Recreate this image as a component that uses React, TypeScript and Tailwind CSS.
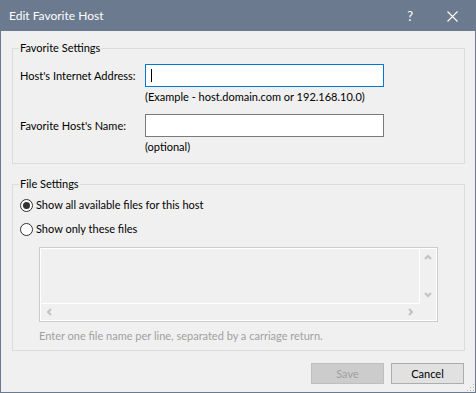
import type { ReactNode } from "react";

function Chevron({ dir }: { dir: "up" | "down" | "left" | "right" }) {
  const pts = {
    up: "1,5 4,2 7,5",
    down: "1,2 4,5 7,2",
    left: "5,1 2,4 5,7",
    right: "2,1 5,4 2,7",
  }[dir];
  return (
    <svg width="8" height="8" viewBox="0 0 8 8" className="block">
      <polyline points={pts} fill="none" stroke="#c2c2c2" strokeWidth="2" />
    </svg>
  );
}

function Radio({ checked, children }: { checked?: boolean; children: ReactNode }) {
  return (
    <div className="flex h-[24px] items-center pl-[7px]">
      <span className="flex h-[13px] w-[13px] items-center justify-center rounded-full border border-[#333333] bg-white">
        {checked ? <span className="h-[7px] w-[7px] rounded-full bg-[#333333]" /> : null}
      </span>
      <span className="ml-[3px]">{children}</span>
    </div>
  );
}

function Group({ title, className, children }: { title: string; className?: string; children: ReactNode }) {
  return (
    <fieldset className={`border border-[#dcdcdc] ${className ?? ""}`}>
      <legend className="ml-[6px] px-[1px] leading-[16px]">{title}</legend>
      {children}
    </fieldset>
  );
}

export default function App() {
  return (
    <div className="relative flex h-[393px] w-[476px] flex-col border border-[#6b7a8f] bg-[#f0f0f0] font-['Segoe_UI',Lato,sans-serif] text-[11px] leading-[16px] text-black">
      <div className="flex h-[30px] shrink-0 items-center bg-[#6b7a8f] pl-[8px] text-white">
        <span className="text-[12px]">Edit Favorite Host</span>
        <span className="ml-auto mr-[34px] text-[13px]">?</span>
        <svg width="11" height="11" viewBox="0 0 11 11" className="mr-[17px]">
          <path d="M0.5 0.5 L10.5 10.5 M10.5 0.5 L0.5 10.5" stroke="white" strokeWidth="1.1" />
        </svg>
      </div>

      <div className="ml-[11px] mr-[10px]">
        <Group title="Favorite Settings" className="mt-[9px]">
          <div className="pb-[8px] pl-[7px] pt-[8px]">
            <div className="flex h-[23px] items-center">
              <span className="w-[125px] whitespace-nowrap">Host's Internet Address:</span>
              <div className="flex h-[23px] w-[239px] items-center border border-[#0078d7] bg-white pl-[5px]">
                <span className="h-[13px] w-px bg-black" />
              </div>
            </div>
            <div className="mt-[2px] pl-[125px]">(Example - host.domain.com or 192.168.10.0)</div>
            <div className="mt-[9px] flex h-[23px] items-center">
              <span className="w-[125px] whitespace-nowrap">Favorite Host's Name:</span>
              <div className="h-[23px] w-[239px] border border-[#7a7a7a] bg-white" />
            </div>
            <div className="mt-[2px] pl-[125px]">(optional)</div>
          </div>
        </Group>

        <Group title="File Settings" className="mt-[12px]">
          <div className="pb-[6px] pt-[1px]">
            <Radio checked>Show all available files for this host</Radio>
            <Radio>Show only these files</Radio>
            <div className="ml-[26px] mt-[6px] h-[75px] w-[399px] border border-[#cccccc]">
              <div className="grid h-full grid-cols-[1fr_16px] grid-rows-[1fr_16px] border border-white">
                <div className="border-b border-r border-white" />
                <div className="flex flex-col items-center justify-between py-[5px]">
                  <Chevron dir="up" />
                  <Chevron dir="down" />
                </div>
                <div className="flex items-center justify-between px-[5px]">
                  <Chevron dir="left" />
                  <Chevron dir="right" />
                </div>
                <div />
              </div>
            </div>
            <div className="ml-[26px] mt-[6px] text-[#a0a0a0]">
              Enter one file name per line, separated by a carriage return.
            </div>
          </div>
        </Group>
      </div>

      <div className="mt-[12px] flex justify-end gap-[7px] pr-[11px]">
        <button className="h-[21px] w-[73px] border border-[#bfbfbf] bg-[#cccccc] text-[#a0a0a0]">Save</button>
        <button className="h-[21px] w-[73px] border border-[#adadad] bg-[#e1e1e1] text-black">Cancel</button>
      </div>

      <svg width="10" height="10" viewBox="0 0 10 10" className="absolute bottom-0 right-0">
        <rect x="8" y="2" width="1" height="1" fill="#b5b5b5" />
        <rect x="5" y="5" width="1" height="1" fill="#b5b5b5" />
        <rect x="8" y="5" width="1" height="1" fill="#b5b5b5" />
        <rect x="2" y="8" width="1" height="1" fill="#b5b5b5" />
        <rect x="5" y="8" width="1" height="1" fill="#b5b5b5" />
        <rect x="8" y="8" width="1" height="1" fill="#b5b5b5" />
      </svg>
    </div>
  );
}
